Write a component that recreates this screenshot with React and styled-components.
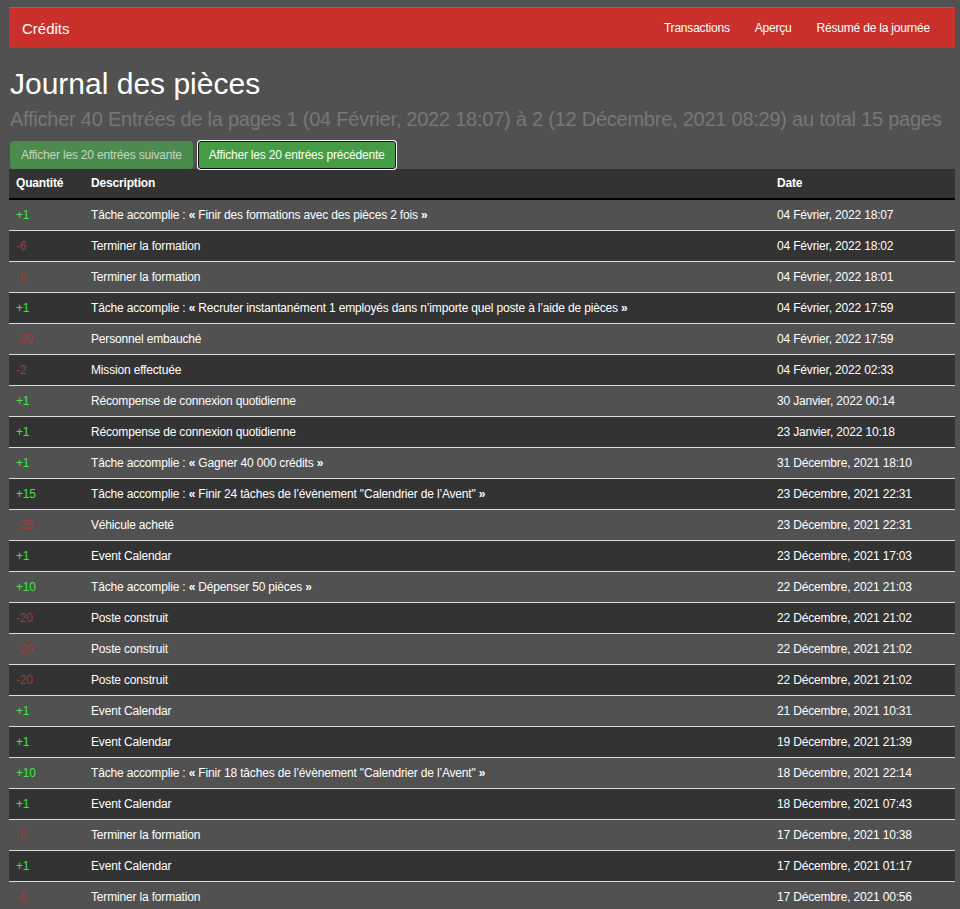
import React from "react";
import styled, { createGlobalStyle } from "styled-components";

const GlobalStyle = createGlobalStyle`
  html, body {
    margin: 0;
    padding: 0;
    background: #515151;
    font-family: "Liberation Sans", Arial, sans-serif;
    color: #fff;
  }
`;

const Page = styled.div`
  padding: 7px 5px 0 9px;
`;

const Navbar = styled.nav`
  display: flex;
  align-items: center;
  justify-content: space-between;
  height: 40px;
  background: #c9302c;
  border-top: 1px solid #d14a45;
  padding: 0 25px 0 13px;
`;

const Brand = styled.span`
  font-size: 15px;
  color: #fff;
`;

const NavLinks = styled.div`
  display: flex;
  gap: 25px;
`;

const NavLink = styled.a`
  font-size: 12px;
  letter-spacing: -0.2px;
  color: #fff;
  text-decoration: none;
`;

const Title = styled.h1`
  margin: 18px 0 0 1px;
  font-size: 30px;
  font-weight: normal;
  line-height: 36px;
`;

const Subtitle = styled.div`
  margin: 5px 0 0 1px;
  font-size: 20px;
  letter-spacing: -0.24px;
  line-height: 24px;
  white-space: nowrap;
  color: #777;
`;

const ButtonRow = styled.div`
  display: flex;
  gap: 5px;
  margin: 10px 0 0 1px;
`;

const Button = styled.button`
  font-family: inherit;
  font-size: 12px;
  letter-spacing: -0.2px;
  height: 28px;
  padding: 0 10px;
  border-radius: 3px;
  border: 1px solid ${(p) => (p.$active ? "#111" : "#4a8a4a")};
  background: ${(p) => (p.$active ? "#449d44" : "#4d8a4d")};
  color: ${(p) => (p.$active ? "#fff" : "#c4d6c4")};
  box-shadow: ${(p) => (p.$active ? "0 0 0 1px #fff" : "none")};
  cursor: pointer;
`;

const Table = styled.div`
  margin-top: 0;
`;

const Row = styled.div`
  display: grid;
  grid-template-columns: 74px 1fr 186px;
  background: ${(p) => (p.$dark ? "#333" : "#515151")};
  border-bottom: ${(p) => (p.$head ? "2px solid #000" : "1px solid #ddd")};
  font-size: 12px;
  letter-spacing: -0.17px;
  line-height: 14px;
  font-weight: ${(p) => (p.$head ? "bold" : "normal")};
`;

const Cell = styled.div`
  padding: ${(p) => (p.$head ? "7px 7px 8px 8px" : "8px 7px 8px 8px")};
  white-space: nowrap;
  overflow: hidden;
`;

const QtyCell = styled(Cell)`
  padding-left: 7px;
`;

const Amount = styled(QtyCell)`
  color: ${(p) => (p.$positive ? "#3ee83e" : "#a83838")};
`;

const Quote = styled.span`
  font-weight: bold;
`;

const task = (text) => (
  <>
    Tâche accomplie : <Quote>«</Quote> {text} <Quote>»</Quote>
  </>
);

const entries = [
  ["+1", task("Finir des formations avec des pièces 2 fois"), "04 Février, 2022 18:07"],
  ["-6", "Terminer la formation", "04 Février, 2022 18:02"],
  ["-6", "Terminer la formation", "04 Février, 2022 18:01"],
  ["+1", task("Recruter instantanément 1 employés dans n’importe quel poste à l’aide de pièces"), "04 Février, 2022 17:59"],
  ["-20", "Personnel embauché", "04 Février, 2022 17:59"],
  ["-2", "Mission effectuée", "04 Février, 2022 02:33"],
  ["+1", "Récompense de connexion quotidienne", "30 Janvier, 2022 00:14"],
  ["+1", "Récompense de connexion quotidienne", "23 Janvier, 2022 10:18"],
  ["+1", task("Gagner 40 000 crédits"), "31 Décembre, 2021 18:10"],
  ["+15", task("Finir 24 tâches de l’évènement \"Calendrier de l’Avent\""), "23 Décembre, 2021 22:31"],
  ["-25", "Véhicule acheté", "23 Décembre, 2021 22:31"],
  ["+1", "Event Calendar", "23 Décembre, 2021 17:03"],
  ["+10", task("Dépenser 50 pièces"), "22 Décembre, 2021 21:03"],
  ["-20", "Poste construit", "22 Décembre, 2021 21:02"],
  ["-20", "Poste construit", "22 Décembre, 2021 21:02"],
  ["-20", "Poste construit", "22 Décembre, 2021 21:02"],
  ["+1", "Event Calendar", "21 Décembre, 2021 10:31"],
  ["+1", "Event Calendar", "19 Décembre, 2021 21:39"],
  ["+10", task("Finir 18 tâches de l’évènement \"Calendrier de l’Avent\""), "18 Décembre, 2021 22:14"],
  ["+1", "Event Calendar", "18 Décembre, 2021 07:43"],
  ["-6", "Terminer la formation", "17 Décembre, 2021 10:38"],
  ["+1", "Event Calendar", "17 Décembre, 2021 01:17"],
  ["-6", "Terminer la formation", "17 Décembre, 2021 00:56"],
];

const App = () => {
  return (
    <Page>
      <GlobalStyle />
      <Navbar>
        <Brand>Crédits</Brand>
        <NavLinks>
          <NavLink>Transactions</NavLink>
          <NavLink>Aperçu</NavLink>
          <NavLink>Résumé de la journée</NavLink>
        </NavLinks>
      </Navbar>
      <Title>Journal des pièces</Title>
      <Subtitle>
        Afficher 40 Entrées de la pages 1 (04 Février, 2022 18:07) à 2 (12 Décembre, 2021 08:29) au total 15 pages
      </Subtitle>
      <ButtonRow>
        <Button>Afficher les 20 entrées suivante</Button>
        <Button $active>Afficher les 20 entrées précédente</Button>
      </ButtonRow>
      <Table>
        <Row $head $dark>
          <QtyCell $head>Quantité</QtyCell>
          <Cell $head>Description</Cell>
          <Cell $head>Date</Cell>
        </Row>
        {entries.map(([amount, desc, date], i) => (
          <Row key={i} $dark={i % 2 === 1}>
            <Amount $positive={amount.startsWith("+")}>{amount}</Amount>
            <Cell>{desc}</Cell>
            <Cell>{date}</Cell>
          </Row>
        ))}
      </Table>
    </Page>
  );
};

export default App;
